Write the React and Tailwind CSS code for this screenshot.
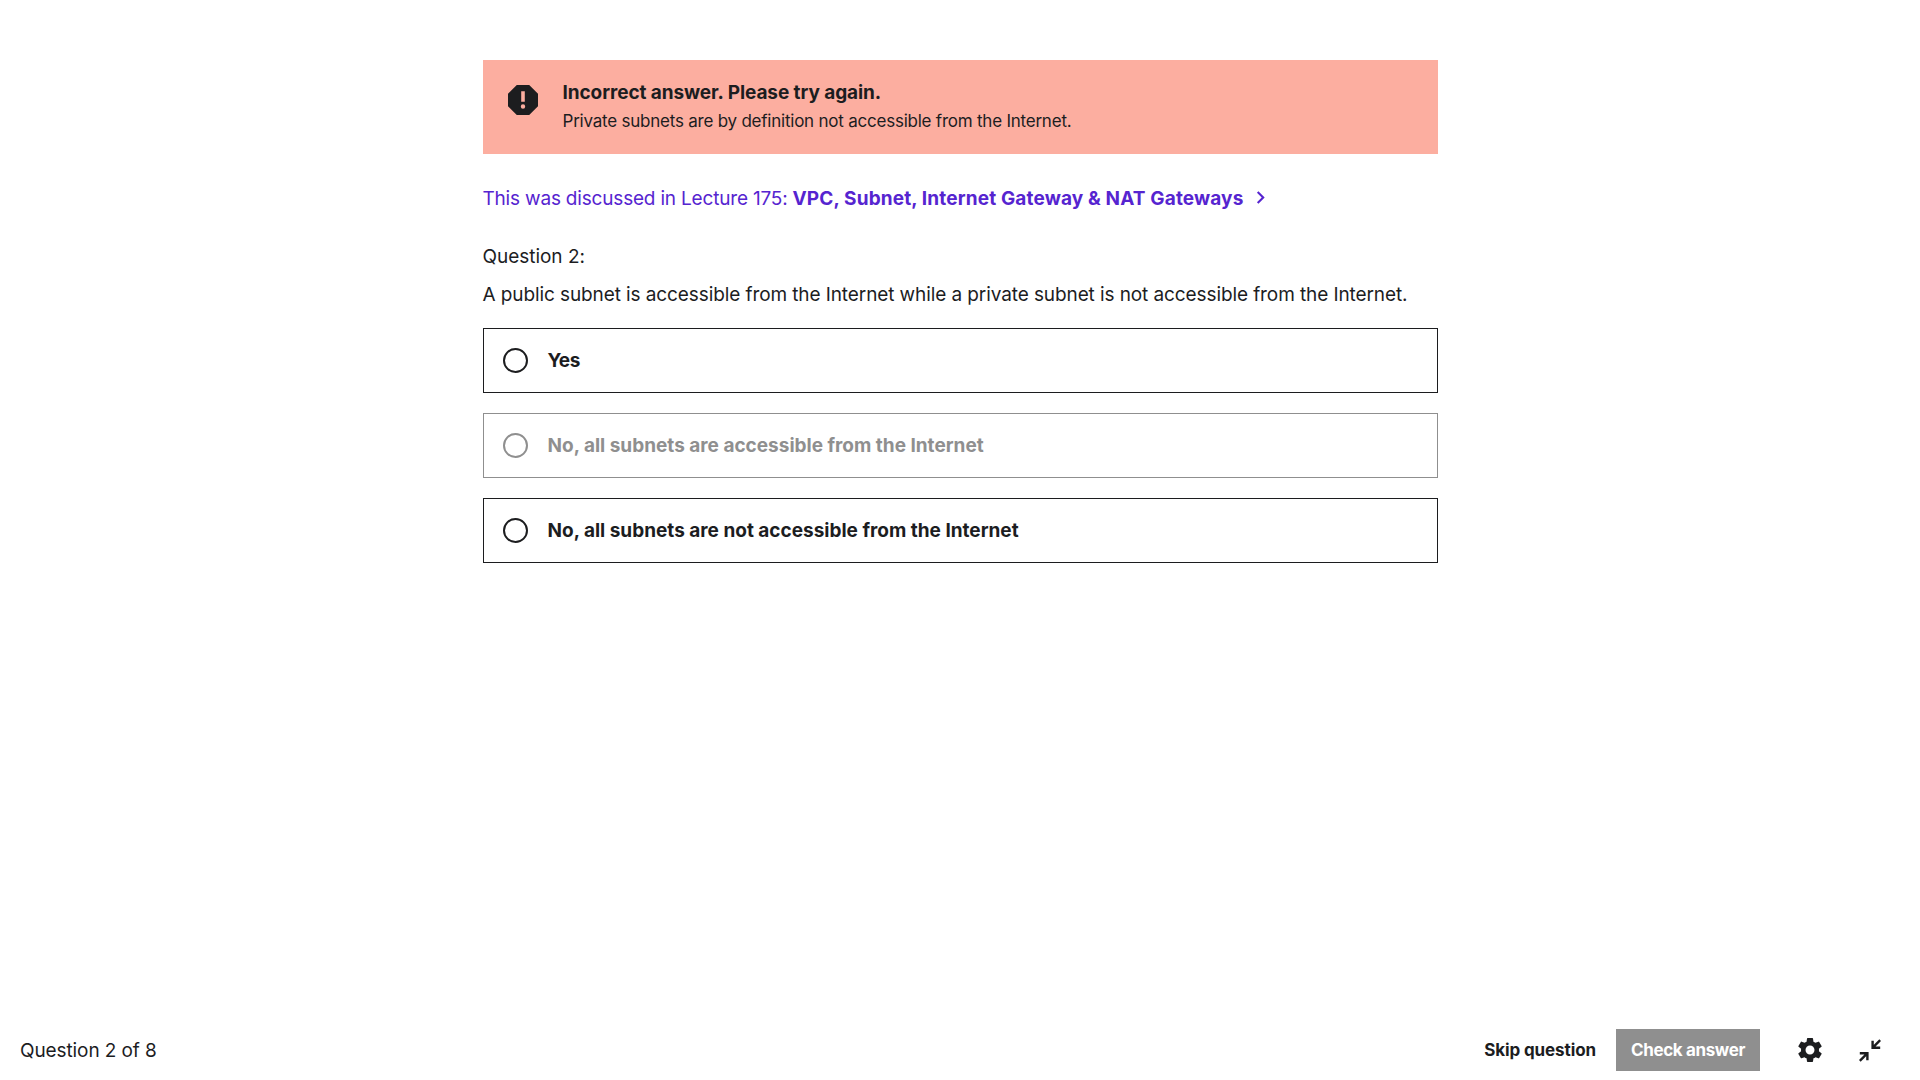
import { MdSettings, MdChevronRight } from 'react-icons/md';

function AlertIcon() {
  return (
    <svg viewBox="0 0 30 30" className="m-[5px] size-[30px] shrink-0">
      <path
        fill="currentColor"
        fillRule="evenodd"
        d="M8.8 0h12.4L30 8.8v12.4L21.2 30H8.8L0 21.2V8.8zM13.2 6.2v10.6h3.6V6.2zM15 19.3a2.2 2.2 0 1 0 0 4.4 2.2 2.2 0 0 0 0-4.4z"
      />
    </svg>
  );
}

function CompressIcon() {
  return (
    <svg viewBox="0 0 22 23" className="h-[23px] w-[22px]" fill="none" stroke="currentColor" strokeWidth="2.4">
      <path d="M21.2 1.2 14 8.4M13.6 1.8v7h7.6" />
      <path d="M.8 21.8 8 14.6M.8 14.2h7.6v7" />
    </svg>
  );
}

function Answer({ children, disabled = false }) {
  return (
    <label
      className={
        disabled
          ? 'flex h-[65px] items-center gap-5 border border-[#8f8f8f] pl-[19px] text-[#8f8f8f]'
          : 'flex h-[65px] items-center gap-5 border border-[#1c1d1f] pl-[19px] text-[#1c1d1f]'
      }
    >
      <span className="size-[25px] rounded-full border-2 border-current" />
      <span className="font-bold">{children}</span>
    </label>
  );
}

export default function App() {
  return (
    <div className="flex h-screen flex-col bg-white font-['Inter',sans-serif] text-[19px] leading-6 text-[#1c1d1f]">
      <main className="mx-auto w-[955px] flex-1 pt-[60px]">
        <div className="flex h-[94px] bg-[#fcaea0] pt-5 pl-5">
          <AlertIcon />
          <div className="ml-5 pt-px">
            <h1 className="font-bold tracking-[-0.08px]">Incorrect answer. Please try again.</h1>
            <p className="text-[17px] leading-8 tracking-[-0.225px]">
              Private subnets are by definition not accessible from the Internet.
            </p>
          </div>
        </div>

        <a className="mt-[33px] flex h-6 items-center text-[#5624d0]">
          <span className="tracking-[-0.188px]">This was discussed in Lecture 175:</span>
          <span className="ml-[5px] font-bold tracking-[0.148px]">VPC, Subnet, Internet Gateway &amp; NAT Gateways</span>
          <MdChevronRight className="mb-[3px] ml-1 size-[25px]" />
        </a>

        <p className="mt-[34px] tracking-[-0.03px]">Question 2:</p>
        <p className="mt-[14px] mb-[21px] whitespace-nowrap tracking-[-0.096px]">
          A public subnet is accessible from the Internet while a private subnet is not accessible from the Internet.
        </p>

        <div className="flex flex-col gap-5">
          <Answer>
            <span className="tracking-[-0.5px]">Yes</span>
          </Answer>
          <Answer disabled>No, all subnets are accessible from the Internet</Answer>
          <Answer>No, all subnets are not accessible from the Internet</Answer>
        </div>
      </main>

      <footer className="flex h-[60px] items-center pr-[39px] pl-5">
        <span className="pt-0.5 tracking-[-0.1px]">Question 2 of 8</span>
        <div className="ml-auto flex items-center">
          <button className="text-[17px] font-bold tracking-[-0.1px]">Skip question</button>
          <button className="ml-5 h-[42px] w-36 bg-[#8f8f8f] text-[17px] font-bold tracking-[-0.38px] text-white">
            Check answer
          </button>
          <MdSettings className="ml-[35px] size-[30px]" />
          <span className="ml-[34px]">
            <CompressIcon />
          </span>
        </div>
      </footer>
    </div>
  );
}
